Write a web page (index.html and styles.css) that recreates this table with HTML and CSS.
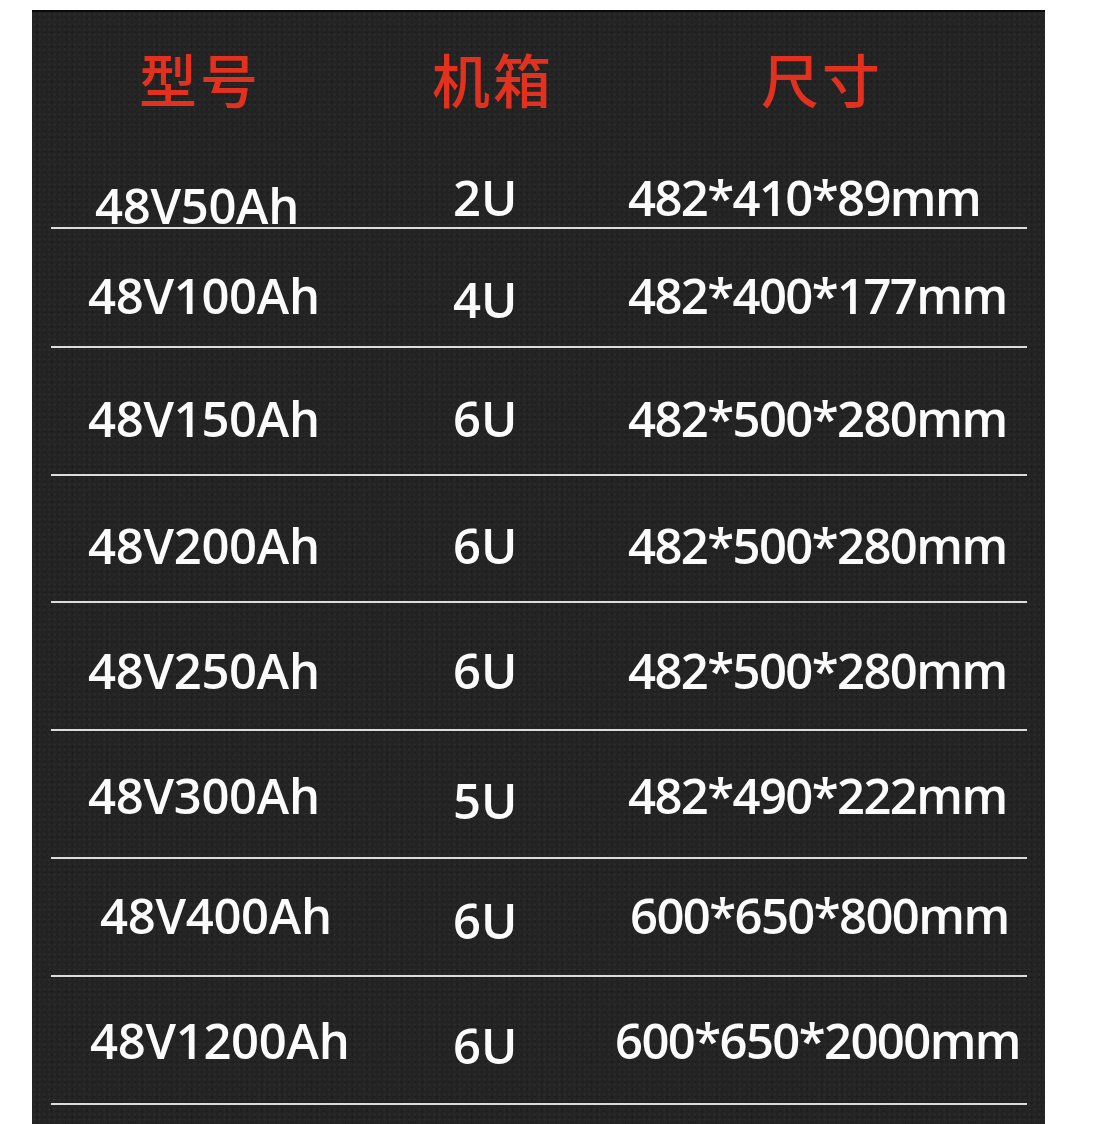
FILE: index.html
```html
<!DOCTYPE html>
<html lang="zh-CN">
<head>
<meta charset="utf-8">
<title>48V 电池规格</title>
<link rel="stylesheet" href="styles.css">
</head>
<body>
<div class="panel">
  <div class="head">
    <div class="h h1">型号</div>
    <div class="h h2">机箱</div>
    <div class="h h3">尺寸</div>
  </div>
  <div class="row r1"><div class="c m sh7 dn8">48V50Ah</div><div class="c">2U</div><div class="c d">482*410*89mm</div></div>
  <div class="row r2"><div class="c m">48V100Ah</div><div class="c dn4">4U</div><div class="c d">482*400*177mm</div></div>
  <div class="row r3"><div class="c m">48V150Ah</div><div class="c">6U</div><div class="c d">482*500*280mm</div></div>
  <div class="row r4"><div class="c m">48V200Ah</div><div class="c">6U</div><div class="c d">482*500*280mm</div></div>
  <div class="row r5"><div class="c m">48V250Ah</div><div class="c">6U</div><div class="c d">482*500*280mm</div></div>
  <div class="row r6"><div class="c m">48V300Ah</div><div class="c dn5">5U</div><div class="c d">482*490*222mm</div></div>
  <div class="row r7"><div class="c m sh12">48V400Ah</div><div class="c dn5">6U</div><div class="c d sh2">600*650*800mm</div></div>
  <div class="row r8"><div class="c m sh2">48V1200Ah</div><div class="c dn5">6U</div><div class="c d shl13">600*650*2000mm</div></div>
</div>
</body>
</html>
```
FILE: styles.css
```css
html, body {
  margin: 0;
  padding: 0;
  background: #ffffff;
}
body {
  overflow: hidden;
}
.panel {
  width: 1013px;
  margin: 10px 0 0 32px;
  border-top: 2px solid #0b0b0b;
  background-color: #232323;
  background-image:
    radial-gradient(rgba(255,255,255,0.03) 1px, transparent 1.5px),
    radial-gradient(rgba(0,0,0,0.15) 1px, transparent 1.5px);
  background-size: 5px 5px, 7px 7px;
  background-position: 0 0, 2px 3px;
  min-height: 1140px;
  padding: 0 18px 0 19px;
  box-sizing: border-box;
}
.head {
  height: 118px;
  display: grid;
  grid-template-columns: 88px 293px 329px 1fr;
  box-sizing: border-box;
  padding-top: 37px;
}
.h {
  font-family: "Noto Sans CJK SC", "Noto Sans", sans-serif;
  font-weight: 500;
  font-size: 58px;
  line-height: 1;
  color: #e2321f;
  letter-spacing: 3px;
  white-space: nowrap;
}
.h1 { grid-column: 2; }
.h2 { grid-column: 3; }
.h3 { grid-column: 4; }

.row {
  display: grid;
  grid-template-columns: 365px 175px 1fr;
  align-items: start;
  padding-left: 37px;
  border-bottom: 2px solid #dcdcdc;
  box-sizing: border-box;
}
.c {
  font-family: "Open Sans", "Noto Sans", sans-serif;
  font-weight: 600;
  font-size: 49px;
  line-height: 1;
  color: #fbfbfb;
  white-space: nowrap;
}
.m { letter-spacing: -0.3px; }
.d { letter-spacing: -1.6px; }
.r1 { height: 99px;  padding-top: 43px; }
.r2 { height: 119px; padding-top: 42px; }
.r3 { height: 128px; padding-top: 46px; }
.r4 { height: 127px; padding-top: 45px; }
.r5 { height: 128px; padding-top: 43px; }
.r6 { height: 128px; padding-top: 40px; }
.r7 { height: 118px; padding-top: 32px; }
.r8 { height: 128px; padding-top: 39px; }

.dn4 { margin-top: 4px; }
.dn5 { margin-top: 5px; }
.dn8 { margin-top: 8px; }
.sh2 { margin-left: 2px; }
.sh7 { margin-left: 7px; }
.sh12 { margin-left: 12px; }
.shl13 { margin-left: -13px; }
```
